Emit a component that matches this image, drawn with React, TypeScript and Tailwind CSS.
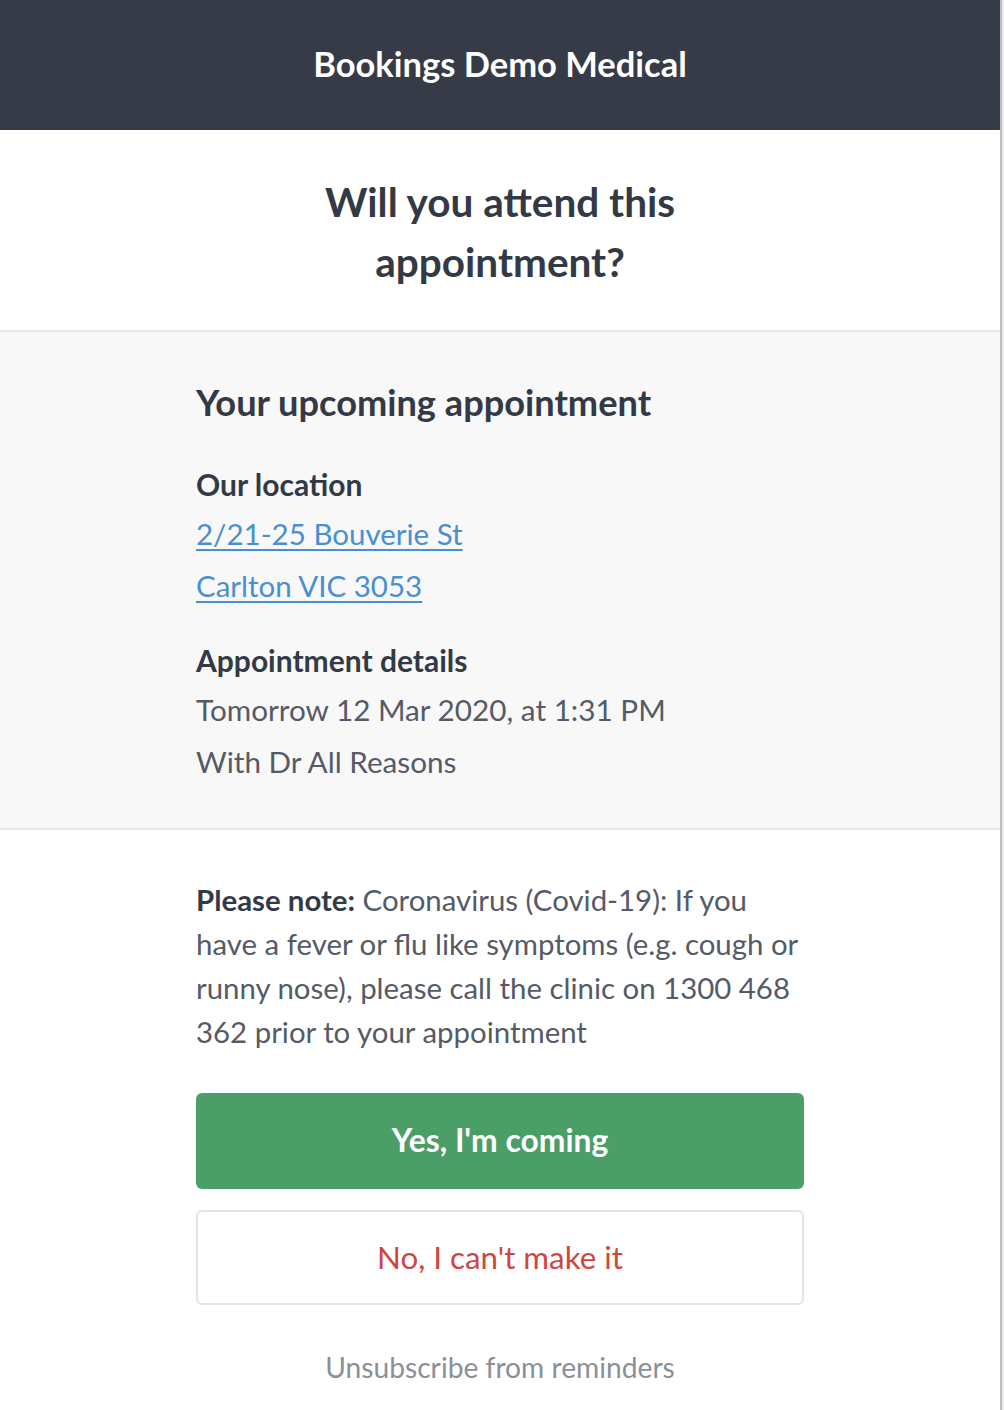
export default function App() {
  return (
    <div className="flex min-h-[1410px] w-[1004px] bg-[#e9e9e9] font-['Lato','Noto_Sans',sans-serif]">
      <div className="w-[1000px] bg-white">
        <header className="flex h-[130px] items-center justify-center bg-[#363b47] pb-[2px]">
          <h1 className="text-[34.5px] font-bold text-white">Bookings Demo Medical</h1>
        </header>

        <section className="flex justify-center border-b-2 border-[#e6e6e6] pb-[38px] pt-[42px]">
          <h2 className="w-[440px] text-center text-[40.5px] font-bold leading-[60px] text-[#333a45]">
            Will you attend this appointment?
          </h2>
        </section>

        <section className="border-b-2 border-[#e6e6e6] bg-[#f8f8f8] px-[196px] pb-[40px] pt-[44px]">
          <h3 className="text-[36.2px] font-bold leading-[52px] text-[#333a45]">Your upcoming appointment</h3>

          <div className="mt-[32px]">
            <h4 className="text-[30px] font-bold leading-[48px] text-[#333a45]">Our location</h4>
            <a href="#" className="block text-[29.5px] leading-[52px] text-[#4a8fcf] underline underline-offset-[4px]">
              2/21-25 Bouverie St
            </a>
            <a href="#" className="block text-[29.5px] leading-[52px] text-[#4a8fcf] underline underline-offset-[4px]">
              Carlton VIC 3053
            </a>
          </div>

          <div className="mt-[24px]">
            <h4 className="text-[30px] font-bold leading-[48px] text-[#333a45]">Appointment details</h4>
            <p className="text-[29.7px] leading-[52px] text-[#555b66]">Tomorrow 12 Mar 2020, at 1:31 PM</p>
            <p className="text-[29.7px] leading-[52px] text-[#555b66]">With Dr All Reasons</p>
          </div>
        </section>

        <section className="px-[196px] pt-[48px]">
          <p className="text-[29.4px] leading-[44px] text-[#555b66]">
            <span className="font-bold text-[#333a45]">Please note:</span> Coronavirus (Covid-19): If you have a
            fever or flu like symptoms (e.g. cough or runny nose), please call the clinic on 1300 468 362 prior to
            your appointment
          </p>

          <button className="mt-[39px] flex h-[96px] w-full items-center justify-center rounded-[6px] bg-[#4c9e68] text-[31.8px] font-bold text-white">
            Yes, I'm coming
          </button>
          <button className="mt-[21px] flex h-[95px] w-full items-center justify-center rounded-[6px] border-2 border-[#e4e4e4] bg-white text-[31.3px] text-[#d0463e]">
            No, I can't make it
          </button>

          <p className="mt-[45px] text-center text-[28.2px] leading-[34px] text-[#8a8f99]">Unsubscribe from reminders</p>
        </section>
      </div>
      <div className="w-[4px] border-l-2 border-[#bdbdbd]" />
    </div>
  )
}
